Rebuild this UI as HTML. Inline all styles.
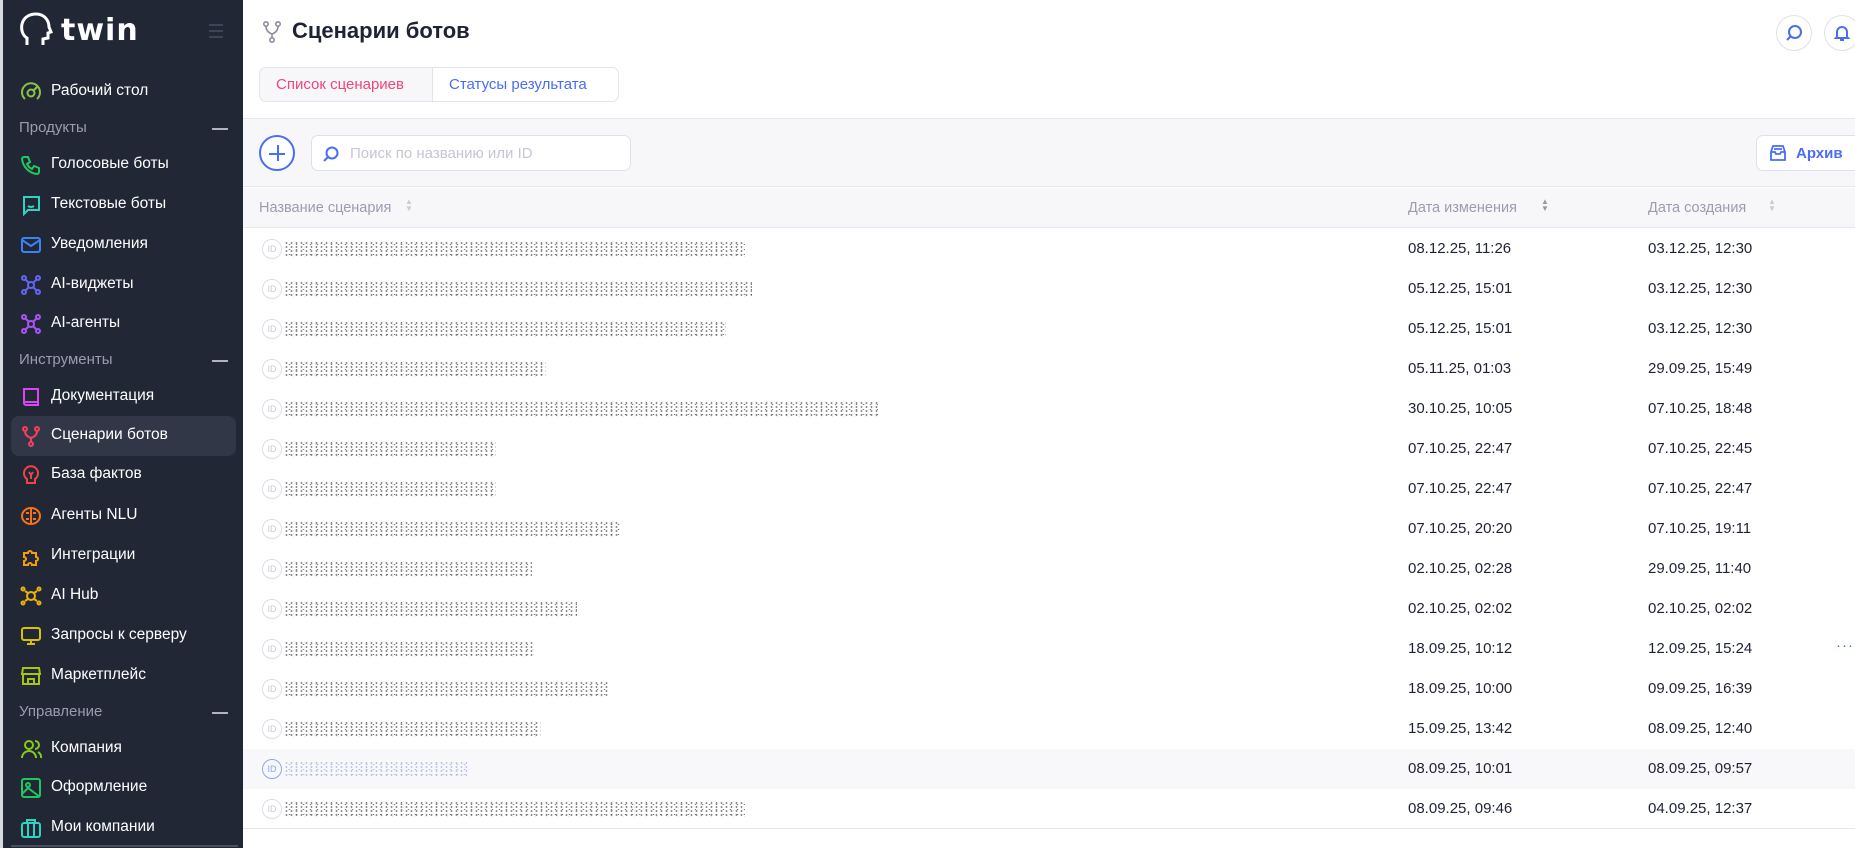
<!DOCTYPE html>
<html><head><meta charset="utf-8"><style>
*{box-sizing:border-box;margin:0;padding:0}
body{width:1855px;height:848px;overflow:hidden;font-family:"Liberation Sans",sans-serif;background:#fff;position:relative}
.sb{position:absolute;left:0;top:0;width:243px;height:848px;background:#222736;border-left:3px solid #d8dae2}
.logo{position:absolute;left:16px;top:12px;display:flex;align-items:center;color:#fff;font-size:30px;font-weight:bold;letter-spacing:1px}
.it{position:absolute;left:0;width:243px;height:40px;display:flex;align-items:center;color:#fff;font-size:15.5px}
.it svg{position:absolute;left:17px;top:10px}
.it span{position:absolute;left:48px}
.sec{position:absolute;left:16px;color:#9a9db0;font-size:15px}
.sec:after{content:"";position:absolute;left:193px;top:9px;width:16px;height:2px;background:#b0b3c2}
.act{position:absolute;left:8px;top:416px;width:225px;height:40px;background:#323748;border-radius:8px}
.main{position:absolute;left:243px;top:0;right:0;height:848px}
.title{position:absolute;left:49px;top:18px;font-size:22px;font-weight:bold;color:#1f2233}
.tabs{position:absolute;left:16px;top:67px;height:35px;width:360px;border:1px solid #e2e4ec;border-radius:7px;display:flex;font-size:15px;overflow:hidden}
.tabs div{display:flex;align-items:center;padding:0 16px}
.tb{position:absolute;left:0;right:0;top:118px;height:69px;background:#f7f7fa;border-top:1px solid #e6e7ee;border-bottom:1px solid #e6e7ee}
.th{position:absolute;top:188px;left:0;right:0;height:40px;background:#f7f7fa;border-bottom:1px solid #e6e7ee;color:#9a9caf;font-size:14.5px}
.row{position:absolute;left:0;right:0;height:40px;font-size:15px;color:#1f2233}
.row .id{position:absolute;left:19px;top:10px;width:20px;height:20px;border:1.5px solid #dcdde5;border-radius:50%;color:#c8c9d4;font-size:9px;display:flex;align-items:center;justify-content:center}
.nz{position:absolute;left:41px;top:12px;height:16px;background-image:radial-gradient(#1a1a1a 0.7px,transparent 1.1px),radial-gradient(#555 0.6px,transparent 1px),radial-gradient(#333 0.6px,transparent 1px);background-size:5px 4px,7px 5px,11px 3px;background-position:0 0,2px 1px,4px 2px;opacity:.75}
.d1{position:absolute;left:1165px;top:11px}
.d2{position:absolute;left:1405px;top:11px}
.cb{position:absolute;width:36px;height:36px;border:1px solid #dfe1ea;border-radius:50%;display:flex;align-items:center;justify-content:center;background:#fff}
</style></head><body>
<div class="sb">
 <div class="logo"><svg width="34" height="36" viewBox="0 0 34 36" fill="none" stroke="#fff" stroke-width="3"><path d="M8 33 V26 C3 23 2 17 3 12 C5 4 12 2 17 2 C25 2 30 8 30 15 L32 20 L29 21 L29 26 L24 27 L24 33"/></svg><span style="margin-left:8px;font-family:'DejaVu Sans',sans-serif">twin</span></div>
 <div style="position:absolute;left:206px;top:24px;width:14px;height:14px;border-top:2px solid #3e4356;border-bottom:2px solid #3e4356"><div style="margin-top:4px;height:2px;background:#3e4356"></div></div>
 <div class="act"></div>
 <div class="it" style="top:71px"><svg width="22" height="22" fill="none" stroke="#8bc34a" stroke-width="2"><path d="M5 18A9 9 0 1 1 17 18"/><circle cx="11" cy="12" r="3.5"/><path d="M13 10l4-4"/></svg><span>Рабочий стол</span></div>
 <div class="sec" style="top:119px">Продукты</div>
 <div class="it" style="top:144px"><svg width="22" height="22" fill="none" stroke="#22c55e" stroke-width="2"><path d="M4 3h4l2 5-3 2a11 11 0 0 0 5 5l2-3 5 2v4a2 2 0 0 1-2 2A17 17 0 0 1 2 5a2 2 0 0 1 2-2z"/></svg><span>Голосовые боты</span></div>
 <div class="it" style="top:184px"><svg width="22" height="22" fill="none" stroke="#2dd4bf" stroke-width="2"><path d="M3 3h16v13H8l-4 4V3z"/><path d="M8 9v0M14 9v0M8 12q3 2 6 0"/></svg><span>Текстовые боты</span></div>
 <div class="it" style="top:224px"><svg width="22" height="22" fill="none" stroke="#3b82f6" stroke-width="2"><rect x="2" y="4" width="18" height="14" rx="2"/><path d="M2 6l9 6 9-6"/></svg><span>Уведомления</span></div>
 <div class="it" style="top:264px"><svg width="22" height="22" fill="none" stroke="#6366f1" stroke-width="2"><circle cx="11" cy="11" r="3"/><circle cx="4" cy="4" r="2"/><circle cx="18" cy="4" r="2"/><circle cx="4" cy="18" r="2"/><circle cx="18" cy="18" r="2"/><path d="M6 6l3 3M16 6l-3 3M6 16l3-3M16 16l-3-3"/></svg><span>AI-виджеты</span></div>
 <div class="it" style="top:303px"><svg width="22" height="22" fill="none" stroke="#a855f7" stroke-width="2"><circle cx="11" cy="11" r="3"/><circle cx="4" cy="4" r="2"/><circle cx="18" cy="4" r="2"/><circle cx="4" cy="18" r="2"/><circle cx="18" cy="18" r="2"/><path d="M6 6l3 3M16 6l-3 3M6 16l3-3M16 16l-3-3"/></svg><span>AI-агенты</span></div>
 <div class="sec" style="top:351px">Инструменты</div>
 <div class="it" style="top:376px"><svg width="22" height="22" fill="none" stroke="#d946ef" stroke-width="2"><path d="M4 3h14v16H6a2 2 0 0 1-2-2z"/><path d="M4 16h14"/></svg><span>Документация</span></div>
 <div class="it" style="top:415px"><svg width="22" height="22" fill="none" stroke="#f43f5e" stroke-width="2"><circle cx="5" cy="4" r="2"/><circle cx="17" cy="4" r="2"/><circle cx="11" cy="19" r="2"/><path d="M5 6q0 5 6 7q6-2 6-7M11 13v4"/></svg><span>Сценарии ботов</span></div>
 <div class="it" style="top:454px"><svg width="22" height="22" fill="none" stroke="#ef4444" stroke-width="2"><path d="M7 15a7 7 0 1 1 8 0v4H7z"/><path d="M9 8l2 3 2-3M11 11v4"/></svg><span>База фактов</span></div>
 <div class="it" style="top:495px"><svg width="22" height="22" fill="none" stroke="#f97316" stroke-width="2"><ellipse cx="11" cy="11" rx="9" ry="8"/><path d="M11 3v16M6 8h3M13 8h3M6 14h3M13 14h3"/></svg><span>Агенты NLU</span></div>
 <div class="it" style="top:535px"><svg width="22" height="22" fill="none" stroke="#f59e0b" stroke-width="2"><path d="M4 8h4a2 2 0 1 1 4 0h4v4a2 2 0 1 1 0 4v4h-4a2 2 0 1 0-4 0H4v-4a2 2 0 1 0 0-4z"/></svg><span>Интеграции</span></div>
 <div class="it" style="top:575px"><svg width="22" height="22" fill="none" stroke="#eab308" stroke-width="2"><circle cx="11" cy="11" r="4"/><circle cx="3" cy="4" r="1.5"/><circle cx="19" cy="4" r="1.5"/><circle cx="3" cy="18" r="1.5"/><circle cx="19" cy="18" r="1.5"/><path d="M5 6l3 2M17 6l-3 2M5 16l3-2M17 16l-3-2"/></svg><span>AI Hub</span></div>
 <div class="it" style="top:615px"><svg width="22" height="22" fill="none" stroke="#d4c400" stroke-width="2"><rect x="2" y="3" width="18" height="12" rx="2"/><path d="M11 15v4M7 19h8"/></svg><span>Запросы к серверу</span></div>
 <div class="it" style="top:655px"><svg width="22" height="22" fill="none" stroke="#a3c614" stroke-width="2"><path d="M3 3h16l1 6H2z"/><path d="M3 9v10h16V9M8 19v-5h6v5"/></svg><span>Маркетплейс</span></div>
 <div class="sec" style="top:703px">Управление</div>
 <div class="it" style="top:728px"><svg width="22" height="22" fill="none" stroke="#84cc16" stroke-width="2"><circle cx="9" cy="7" r="4"/><path d="M2 20a7 7 0 0 1 14 0M15 3a4 4 0 0 1 0 8M18 14a6 6 0 0 1 3 6"/></svg><span>Компания</span></div>
 <div class="it" style="top:767px"><svg width="22" height="22" fill="none" stroke="#22c55e" stroke-width="2"><rect x="2" y="2" width="18" height="18" rx="2"/><circle cx="8" cy="8" r="2"/><path d="M2 17l6-6 12 9"/></svg><span>Оформление</span></div>
 <div class="it" style="top:807px"><svg width="22" height="22" fill="none" stroke="#2dd4bf" stroke-width="2"><rect x="2" y="6" width="18" height="14" rx="2"/><path d="M7 6V3h8v3M8 6v14M14 6v14"/></svg><span>Мои компании</span></div>
 <div style="position:absolute;left:8px;right:5px;top:845px;height:2px;background:#4a4f62"></div>
</div>
<div class="main">
 <svg style="position:absolute;left:19px;top:20px" width="20" height="24" fill="none" stroke="#8b8ea0" stroke-width="1.6"><circle cx="4" cy="4" r="2.2"/><circle cx="16" cy="4" r="2.2"/><circle cx="10" cy="20" r="2.2"/><path d="M4 6q0 6 6 8q6-2 6-8M10 14v4"/></svg>
 <div class="title">Сценарии ботов</div>
 <div class="cb" style="left:1533px;top:15px"><svg width="18" height="18" fill="none" stroke="#4a6cf7" stroke-width="2"><circle cx="10" cy="8" r="6"/><path d="M6 12l-4 4"/></svg></div>
 <div class="cb" style="left:1581px;top:15px"><svg width="18" height="18" fill="none" stroke="#4a6cf7" stroke-width="2"><path d="M4 13V8a5 5 0 0 1 10 0v5l1 1H3zM7 16h4"/></svg></div>
 <div class="tabs"><div style="background:#f7f7fa;color:#f0457a;border-right:1px solid #e2e4ec;width:173px">Список сценариев</div><div style="color:#4a6cf7">Статусы результата</div></div>
 <div class="tb">
  <div style="position:absolute;left:16px;top:16px;width:36px;height:36px;border:2px solid #4a6cf7;border-radius:50%;background:#fff"><div style="position:absolute;left:16px;top:8px;width:2px;height:16px;background:#4a6cf7"></div><div style="position:absolute;left:8px;top:16px;width:16px;height:2px;background:#4a6cf7"></div></div>
  <div style="position:absolute;left:68px;top:16px;width:320px;height:36px;border:1px solid #dfe1ea;border-radius:7px;background:#fff;color:#c4c6d2;font-size:15px;padding:9px 0 0 38px">Поиск по названию или ID<svg style="position:absolute;left:10px;top:9px" width="18" height="18" fill="none" stroke="#4a6cf7" stroke-width="2"><circle cx="10" cy="8" r="5.5"/><path d="M6 12l-4 4"/></svg></div>
  <div style="position:absolute;left:1513px;top:16px;width:110px;height:36px;border:1px solid #dfe1ea;border-radius:7px;background:#fff;color:#4a6cf7;font-size:15px;font-weight:bold;padding:9px 0 0 39px">Архив<svg style="position:absolute;left:11px;top:8px" width="20" height="18" fill="none" stroke="#4a6cf7" stroke-width="1.8"><path d="M3 8l2-6h10l2 6v8H3z"/><path d="M3 8h4l1 2h4l1-2h4M6 5h8"/></svg></div>
 </div>
 <div class="th"><span style="position:absolute;left:16px;top:12px">Название сценария</span><span style="position:absolute;top:10px;font-size:8px;color:#ccc;line-height:7px;left:162px">▲<br>▼</span>
  <span style="position:absolute;left:1165px;top:12px">Дата изменения</span><span style="position:absolute;left:1298px;top:10px;font-size:8px;color:#999;line-height:7px">▲<br>▼</span>
  <span style="position:absolute;left:1405px;top:12px">Дата создания</span><span style="position:absolute;left:1525px;top:10px;font-size:8px;color:#ccc;line-height:7px">▲<br>▼</span></div>
 <div class="row" style="top:229px"><div class="id">ID</div><div class="nz" style="width:461px"></div><span class="d1">08.12.25, 11:26</span><span class="d2">03.12.25, 12:30</span></div>
 <div class="row" style="top:269px"><div class="id">ID</div><div class="nz" style="width:468px"></div><span class="d1">05.12.25, 15:01</span><span class="d2">03.12.25, 12:30</span></div>
 <div class="row" style="top:309px"><div class="id">ID</div><div class="nz" style="width:442px"></div><span class="d1">05.12.25, 15:01</span><span class="d2">03.12.25, 12:30</span></div>
 <div class="row" style="top:349px"><div class="id">ID</div><div class="nz" style="width:262px"></div><span class="d1">05.11.25, 01:03</span><span class="d2">29.09.25, 15:49</span></div>
 <div class="row" style="top:389px"><div class="id">ID</div><div class="nz" style="width:594px"></div><span class="d1">30.10.25, 10:05</span><span class="d2">07.10.25, 18:48</span></div>
 <div class="row" style="top:429px"><div class="id">ID</div><div class="nz" style="width:212px"></div><span class="d1">07.10.25, 22:47</span><span class="d2">07.10.25, 22:45</span></div>
 <div class="row" style="top:469px"><div class="id">ID</div><div class="nz" style="width:212px"></div><span class="d1">07.10.25, 22:47</span><span class="d2">07.10.25, 22:47</span></div>
 <div class="row" style="top:509px"><div class="id">ID</div><div class="nz" style="width:336px"></div><span class="d1">07.10.25, 20:20</span><span class="d2">07.10.25, 19:11</span></div>
 <div class="row" style="top:549px"><div class="id">ID</div><div class="nz" style="width:248px"></div><span class="d1">02.10.25, 02:28</span><span class="d2">29.09.25, 11:40</span></div>
 <div class="row" style="top:589px"><div class="id">ID</div><div class="nz" style="width:293px"></div><span class="d1">02.10.25, 02:02</span><span class="d2">02.10.25, 02:02</span></div>
 <div class="row" style="top:629px"><div class="id">ID</div><div class="nz" style="width:250px"></div><span class="d1">18.09.25, 10:12</span><span class="d2">12.09.25, 15:24</span><span style="position:absolute;left:1593px;top:8px;color:#4a6cf7;letter-spacing:1px">···</span></div>
 <div class="row" style="top:669px"><div class="id">ID</div><div class="nz" style="width:326px"></div><span class="d1">18.09.25, 10:00</span><span class="d2">09.09.25, 16:39</span></div>
 <div class="row" style="top:709px"><div class="id">ID</div><div class="nz" style="width:257px"></div><span class="d1">15.09.25, 13:42</span><span class="d2">08.09.25, 12:40</span></div>
 <div class="row" style="top:749px;background:#f8f8fb"><div class="id" style="border-color:#8fa4f5;color:#8fa4f5">ID</div><div class="nz" style="width:183px;opacity:.45;background-image:radial-gradient(#3050d0 0.7px,transparent 1.1px),radial-gradient(#6078e0 0.7px,transparent 1.1px)"></div><span class="d1">08.09.25, 10:01</span><span class="d2">08.09.25, 09:57</span></div>
 <div class="row" style="top:789px;border-bottom:1px solid #e6e7ee"><div class="id">ID</div><div class="nz" style="width:461px"></div><span class="d1">08.09.25, 09:46</span><span class="d2">04.09.25, 12:37</span></div>
</div>
</body></html>
